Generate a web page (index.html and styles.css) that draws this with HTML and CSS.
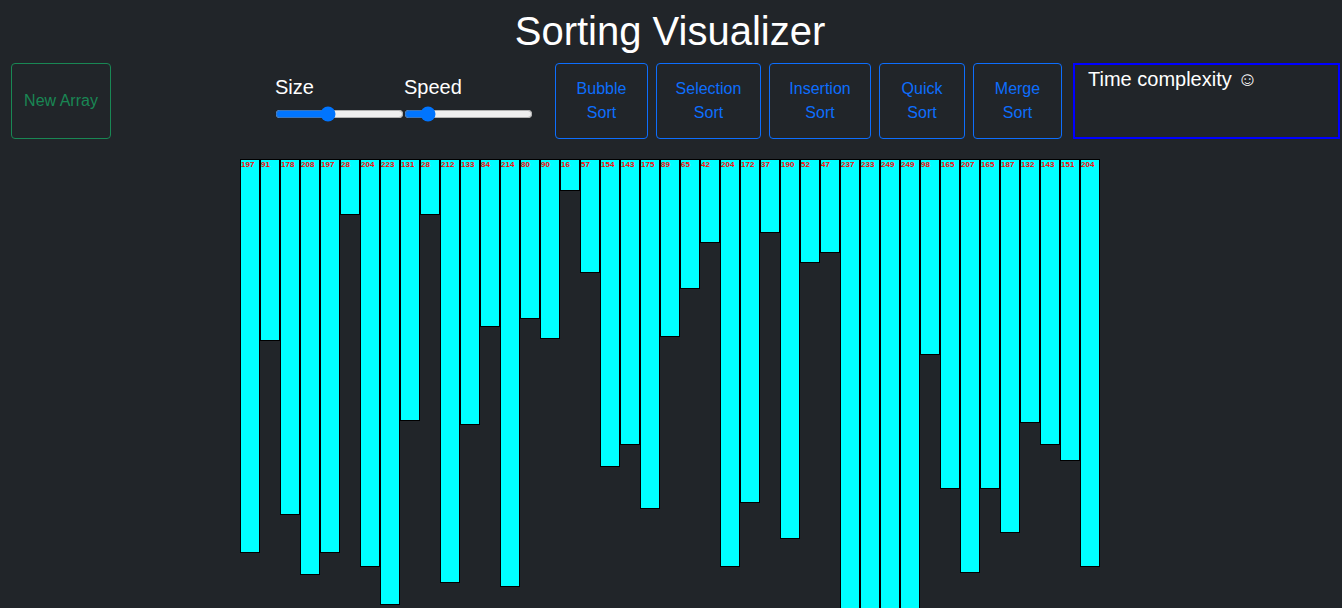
FILE: index.html
```html
<!DOCTYPE html>
<html lang="en">
  <head>
    <meta charset="UTF-8" />
    <meta name="viewport" content="width=device-width, initial-scale=1.0" />
    <title>Sorting Visualizer</title>
    <link rel="stylesheet" href="styles.css">
  </head>

  <body>
    <h1 class="title">Sorting Visualizer</h1>

    <div class="controls">
      <button class="btn btn-green btn-new">New Array</button>

      <div class="sliders">
        <div class="slider">
          <label for="sizeInput">Size</label>
          <input type="range" id="sizeInput" min="0" max="100" value="40" />
        </div>
        <div class="slider">
          <label for="speedInput">Speed</label>
          <input type="range" id="speedInput" min="0" max="100" value="14" />
        </div>
      </div>

      <div class="sorts">
        <button class="btn btn-blue btn-bubble">Bubble Sort</button>
        <button class="btn btn-blue btn-selection">Selection Sort</button>
        <button class="btn btn-blue btn-insertion">Insertion Sort</button>
        <button class="btn btn-blue btn-quick">Quick Sort</button>
        <button class="btn btn-blue btn-merge">Merge Sort</button>
      </div>

      <div class="complexity">Time complexity ☺</div>
    </div>

    <div class="bars">
      <div class="bar" style="height: 394px">197</div>
      <div class="bar" style="height: 182px">91</div>
      <div class="bar" style="height: 356px">178</div>
      <div class="bar" style="height: 416px">208</div>
      <div class="bar" style="height: 394px">197</div>
      <div class="bar" style="height: 56px">28</div>
      <div class="bar" style="height: 408px">204</div>
      <div class="bar" style="height: 446px">223</div>
      <div class="bar" style="height: 262px">131</div>
      <div class="bar" style="height: 56px">28</div>
      <div class="bar" style="height: 424px">212</div>
      <div class="bar" style="height: 266px">133</div>
      <div class="bar" style="height: 168px">84</div>
      <div class="bar" style="height: 428px">214</div>
      <div class="bar" style="height: 160px">80</div>
      <div class="bar" style="height: 180px">90</div>
      <div class="bar" style="height: 32px">16</div>
      <div class="bar" style="height: 114px">57</div>
      <div class="bar" style="height: 308px">154</div>
      <div class="bar" style="height: 286px">143</div>
      <div class="bar" style="height: 350px">175</div>
      <div class="bar" style="height: 178px">89</div>
      <div class="bar" style="height: 130px">65</div>
      <div class="bar" style="height: 84px">42</div>
      <div class="bar" style="height: 408px">204</div>
      <div class="bar" style="height: 344px">172</div>
      <div class="bar" style="height: 74px">37</div>
      <div class="bar" style="height: 380px">190</div>
      <div class="bar" style="height: 104px">52</div>
      <div class="bar" style="height: 94px">47</div>
      <div class="bar" style="height: 474px">237</div>
      <div class="bar" style="height: 466px">233</div>
      <div class="bar" style="height: 498px">249</div>
      <div class="bar" style="height: 498px">249</div>
      <div class="bar" style="height: 196px">98</div>
      <div class="bar" style="height: 330px">165</div>
      <div class="bar" style="height: 414px">207</div>
      <div class="bar" style="height: 330px">165</div>
      <div class="bar" style="height: 374px">187</div>
      <div class="bar" style="height: 264px">132</div>
      <div class="bar" style="height: 286px">143</div>
      <div class="bar" style="height: 302px">151</div>
      <div class="bar" style="height: 408px">204</div>
    </div>
  </body>
</html>
```

FILE: styles.css
```css
* {
  box-sizing: border-box;
}

html,
body {
  height: 100%;
  overflow: hidden;
}

body {
  display: flex;
  flex-direction: column;
  margin: 0;
  background-color: #212529;
  color: white;
  font-family: "Liberation Sans", Arial, sans-serif;
}

.title {
  margin: 0;
  padding: 7px 2px 0 0;
  font-size: 40px;
  font-weight: 400;
  line-height: 48px;
  text-align: center;
}

.controls {
  display: flex;
  flex: none;
  align-items: stretch;
  height: 76px;
  margin-top: 8px;
  padding-left: 11px;
}

.btn {
  padding: 6px 12px;
  background: transparent;
  border: 1px solid;
  border-radius: 4px;
  font-family: inherit;
  font-size: 16px;
  line-height: 24px;
  cursor: pointer;
}

.btn-green {
  color: #198754;
  border-color: #198754;
}

.btn-blue {
  color: #0d6efd;
  border-color: #0d6efd;
}

.btn-new {
  width: 100px;
}

.sliders {
  display: flex;
  margin-left: 164px;
}

.slider {
  display: flex;
  flex-direction: column;
  width: 129px;
  padding-top: 12px;
}

.slider label {
  font-size: 20px;
  line-height: 24px;
}

.slider input {
  width: 129px;
  margin: 7px 0 0;
}

.sorts {
  display: flex;
  gap: 8px;
  margin-left: 22px;
}

.btn-bubble {
  width: 93px;
}

.btn-selection {
  width: 105px;
}

.btn-insertion {
  width: 102px;
}

.btn-quick {
  width: 86px;
}

.btn-merge {
  width: 89px;
}

.complexity {
  width: 267px;
  margin-left: 11px;
  padding: 2px 13px;
  border: 2px solid blue;
  font-size: 20px;
  line-height: 24px;
}

.bars {
  display: flex;
  flex: 1;
  align-items: flex-start;
  min-height: 0;
  margin-top: 20px;
  padding-left: 240px;
  overflow: hidden;
}

.bar {
  flex: none;
  width: 20px;
  background-color: aqua;
  border: 1px solid black;
  color: red;
  font-size: 8px;
  font-weight: bold;
  line-height: 10px;
}
```
